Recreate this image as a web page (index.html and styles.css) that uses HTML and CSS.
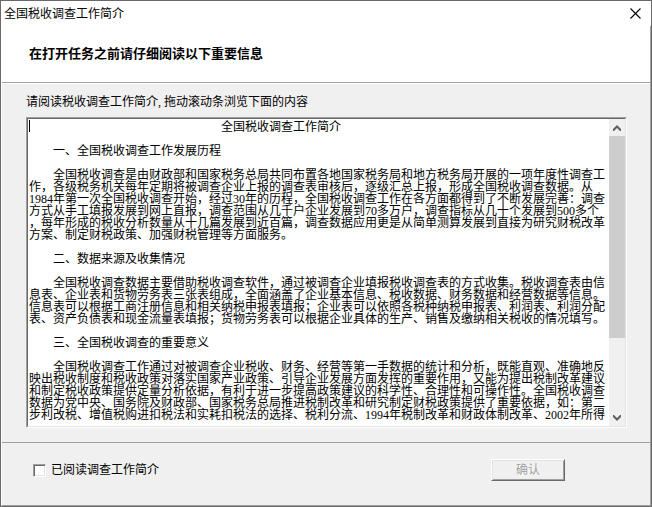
FILE: index.html
```
<!DOCTYPE html>
<html lang="zh-CN">
<head>
    <meta charset="UTF-8">
    <meta name="viewport" content="width=device-width, initial-scale=1.0">
    <title>全国税收调查工作简介</title>
    <link rel="stylesheet" href="styles.css">
</head>
<body>
    <div class="window">
        <div class="title-bar">
            <span>全国税收调查工作简介</span>
            <button class="close-btn" type="button" aria-label="关闭">
                <svg width="11" height="11" viewBox="0 0 11 11"><path d="M.5 .5l10 10M10.5 .5l-10 10" fill="none" stroke="#000" stroke-width="1.1"/></svg>
            </button>
        </div>
        <div class="frame">
            <div class="header">
                <h1>在打开任务之前请仔细阅读以下重要信息</h1>
            </div>
            <div class="content">
                <label for="intro">请阅读税收调查工作简介, 拖动滚动条浏览下面的内容</label>
                <div class="text-box">
                    <textarea id="intro" class="intro" readonly wrap="off" spellcheck="false">　　　　　　　　　　　　　　　　全国税收调查工作简介

　　一、全国税收调查工作发展历程

　　全国税收调查是由财政部和国家税务总局共同布置各地国家税务局和地方税务局开展的一项年度性调查工
作，各级税务机关每年定期将被调查企业上报的调查表审核后，逐级汇总上报，形成全国税收调查数据。从
1984年第一次全国税收调查开始，经过30年的历程，全国税收调查工作在各方面都得到了不断发展完善：调查
方式从手工填报发展到网上直报，调查范围从几千户企业发展到70多万户，调查指标从几十个发展到500多个
，每年形成的税收分析数量从十几篇发展到近百篇，调查数据应用更是从简单测算发展到直接为研究财税改革
方案、制定财税政策、加强财税管理等方面服务。

　　二、数据来源及收集情况

　　全国税收调查数据主要借助税收调查软件，通过被调查企业填报税收调查表的方式收集。税收调查表由信
息表、企业表和货物劳务表三张表组成，全面涵盖了企业基本信息、税收数据、财务数据和经营数据等信息。
信息表可以根据工商注册信息和相关纳税申报表填报；企业表可以依照各税种纳税申报表、利润表、利润分配
表、资产负债表和现金流量表填报；货物劳务表可以根据企业具体的生产、销售及缴纳相关税收的情况填写。

　　三、全国税收调查的重要意义

　　全国税收调查工作通过对被调查企业税收、财务、经营等第一手数据的统计和分析，既能直观、准确地反
映出税收制度和税收政策对落实国家产业政策、引导企业发展方面发挥的重要作用，又能为提出税制改革建议
和制定税收政策提供定量分析依据，有利于进一步提高政策建议的科学性、合理性和可操作性。全国税收调查
数据为党中央、国务院及财政部、国家税务总局推进税制改革和研究制定财税政策提供了重要依据，如：第二
步利改税、增值税购进扣税法和实耗扣税法的选择、税利分流、1994年税制改革和财政体制改革、2002年所得</textarea>
                    <span class="caret"></span>
                    <div class="scrollbar">
                        <button type="button" aria-label="向上滚动">
                            <svg width="8" height="6" viewBox="0 0 8 6"><path d="M0 4L4 0L8 4V6H7L4 3L1 6H0Z" fill="#606060"/></svg>
                        </button>
                        <div class="track"><div class="thumb"></div></div>
                        <button type="button" aria-label="向下滚动">
                            <svg width="8" height="6" viewBox="0 0 8 6"><path d="M0 2L4 6L8 2V0H7L4 3L1 0H0Z" fill="#606060"/></svg>
                        </button>
                    </div>
                </div>
            </div>
            <div class="footer">
                <label class="agree"><input type="checkbox">已阅读调查工作简介</label>
                <button class="ok-btn" type="button" disabled>确认</button>
            </div>
        </div>
    </div>
</body>
</html>
```
FILE: styles.css
```
* {
    box-sizing: border-box;
}
body {
    margin: 0;
    background-color: #f0f0f0;
    color: #000;
    font-family: "Liberation Serif", "Noto Sans CJK SC", sans-serif;
    font-size: 12px;
    line-height: 12px;
}
button, input, textarea {
    font: inherit;
    margin: 0;
}
.window {
    display: flex;
    flex-direction: column;
    height: 100vh;
    border: 1px solid #696969;
}
.title-bar {
    display: flex;
    flex: 0 0 25px;
    align-items: center;
    justify-content: space-between;
    padding: 0 10px 0 3px;
    background-color: #fff;
}
.close-btn {
    display: flex;
    padding: 0;
    border: none;
    background: none;
}
.frame {
    display: flex;
    flex: 1;
    flex-direction: column;
    min-height: 0;
    border-left: 1px solid #fff;
    border-right: 1px solid #a0a0a0;
    border-bottom: 1px solid #a0a0a0;
}
.header {
    display: flex;
    flex: 0 0 57px;
    align-items: center;
    padding-left: 27px;
    background-color: #fff;
    border-bottom: 1px solid #a0a0a0;
}
.header h1 {
    margin: 0;
    font-size: 13px;
    line-height: 16px;
    font-weight: bold;
}
.content {
    display: flex;
    flex: 1;
    flex-direction: column;
    gap: 9px;
    min-height: 0;
    padding: 12px 23px 14px 24px;
    border-top: 1px solid #fff;
    border-bottom: 1px solid #a0a0a0;
}
/* sunken edit box */
.text-box {
    position: relative;
    display: flex;
    flex: 1;
    min-height: 0;
    border: 1px solid;
    border-color: #a0a0a0 #fff #fff #a0a0a0;
    background-color: #fff;
}
.intro {
    flex: 1;
    min-width: 0;
    padding: 2px 1px 1px;
    border: 1px solid;
    border-color: #696969 #fff #e3e3e3 #696969;
    border-right: none;
    outline: none;
    overflow: hidden;
    resize: none;
    color: #000;
    background-color: #fff;
    white-space: pre;
}
.caret {
    position: absolute;
    top: 2px;
    left: 2px;
    width: 1px;
    height: 12px;
    background-color: #000;
}
.scrollbar {
    display: flex;
    flex: 0 0 17px;
    flex-direction: column;
    border-top: 1px solid #696969;
    border-right: 1px solid #e3e3e3;
    border-bottom: 1px solid #e3e3e3;
    background-color: #f0f0f0;
}
.scrollbar button {
    display: flex;
    flex: 0 0 17px;
    align-items: center;
    justify-content: center;
    padding: 0;
    border: none;
    background: none;
}
.track {
    flex: 1;
}
.thumb {
    height: 74%;
    background-color: #cdcdcd;
}
.footer {
    display: flex;
    flex: 0 0 62px;
    align-items: center;
    justify-content: space-between;
    padding: 0 85px 8px 31px;
}
.agree {
    display: flex;
    align-items: center;
    gap: 5px;
}
.agree input {
    appearance: none;
    width: 13px;
    height: 13px;
    border: 1px solid;
    border-color: #a0a0a0 #fff #fff #a0a0a0;
    background-color: #fff;
    box-shadow: inset 1px 1px #696969, inset -1px -1px #e3e3e3;
}
.agree input:checked {
    background-color: #696969;
}
.ok-btn {
    width: 74px;
    height: 22px;
    padding: 0;
    border: 1px solid;
    border-color: #fff #696969 #696969 #fff;
    background-color: #f0f0f0;
    box-shadow: inset 1px 1px #e3e3e3, inset -1px -1px #a0a0a0;
    color: #a0a0a0;
    text-shadow: 1px 1px #fff;
}
```
